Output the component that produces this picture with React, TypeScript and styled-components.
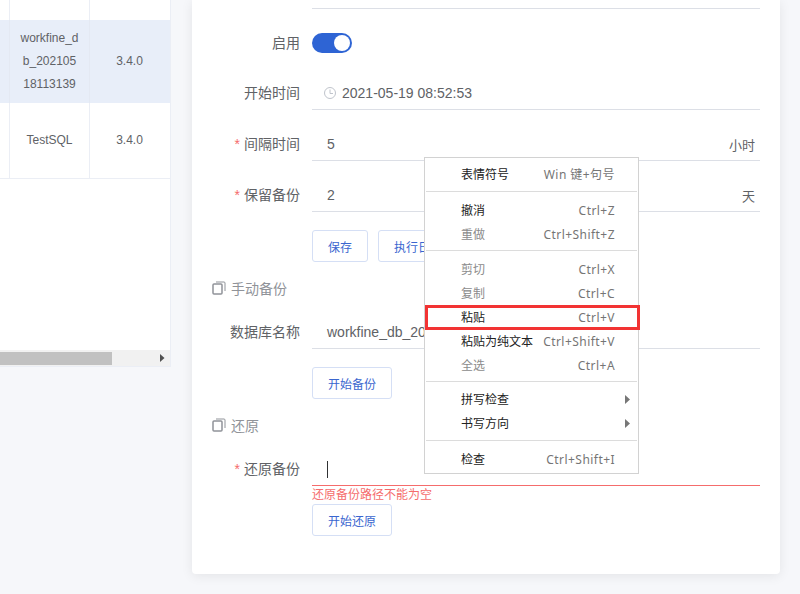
import React from "react";
import styled, { createGlobalStyle } from "styled-components";

const Global = createGlobalStyle`
  html, body { margin: 0; padding: 0; height: 594px; overflow: hidden; background: #f6f7fa; }
  body { font-family: "Liberation Sans", "Noto Sans CJK SC", sans-serif; color: #606266; }
  * { box-sizing: border-box; }
`;

const Page = styled.div`
  display: flex;
  align-items: flex-start;
  gap: 22px;
  width: 800px;
  height: 594px;
  padding-right: 20px;
  position: relative;
  overflow: hidden;
`;

const LeftCard = styled.section`
  width: 171px;
  height: 367px;
  flex: none;
  margin-right: -1px;
  display: flex;
  flex-direction: column;
  background: #fff;
  border-right: 1px solid #ebeef5;
  border-bottom: 1px solid #ebeef5;
`;

const TableRow = styled.div<{ $h: number; $on?: boolean; $end?: boolean }>`
  display: grid;
  grid-template-columns: 10px 80px 79px;
  height: ${(p) => p.$h}px;
  background: ${(p) => (p.$on ? "#e8eef9" : "#fff")};
  border-bottom: ${(p) => (p.$end ? "1px solid #ebeef5" : "none")};
`;

const Cell = styled.div<{ $on?: boolean }>`
  display: flex;
  align-items: center;
  justify-content: center;
  text-align: center;
  font-size: 12px;
  line-height: 23px;
  color: #606266;
  border-right: 1px solid ${(p) => (p.$on ? "#e4e9f3" : "#ebeef5")};
  &:last-child { border-right: none; }
`;

const TableSpace = styled.div`
  flex: 1;
`;

const Scrollbar = styled.div`
  height: 16px;
  background: #f1f1f1;
  display: flex;
  align-items: center;
  justify-content: space-between;
  padding-right: 5px;
`;

const Thumb = styled.div`
  width: 112px;
  height: 13px;
  background: #c1c1c1;
`;

const RightCard = styled.main`
  flex: 1;
  height: 574px;
  background: #fff;
  border-radius: 0 0 4px 4px;
  box-shadow: 0 2px 12px rgba(0, 0, 0, 0.08);
  padding-right: 20px;
  display: flex;
  flex-direction: column;
`;

const TopLine = styled.div`
  height: 9px;
  margin-left: 120px;
  border-bottom: 1px solid #dcdfe6;
  flex: none;
`;

const FormRow = styled.div<{ $mt: number }>`
  display: flex;
  margin-top: ${(p) => p.$mt}px;
  flex: none;
`;

const Label = styled.label`
  width: 120px;
  flex: none;
  padding-right: 12px;
  text-align: right;
  font-size: 14px;
  line-height: 32px;
  color: #606266;
`;

const Star = styled.span`
  color: #f56c6c;
  margin-right: 4px;
`;

const Field = styled.div<{ $error?: boolean }>`
  flex: 1;
  height: 33px;
  display: flex;
  align-items: center;
  justify-content: space-between;
  padding: 0 5px 0 15px;
  font-size: 14px;
  color: #606266;
  border-bottom: 1px solid ${(p) => (p.$error ? "#f56c6c" : "#dcdfe6")};
`;

const ValueWithIcon = styled.span`
  display: flex;
  align-items: center;
  gap: 5px;
  margin-left: -4px;
`;

const Unit = styled.span`
  font-size: 13px;
`;

const Caret = styled.span`
  width: 1px;
  height: 17px;
  background: #303133;
`;

const Toggle = styled.div`
  width: 40px;
  height: 20px;
  margin-top: 6px;
  border-radius: 10px;
  background: #2e64d4;
  display: flex;
  justify-content: flex-end;
  padding: 2px;
`;

const Knob = styled.div`
  width: 16px;
  height: 16px;
  border-radius: 50%;
  background: #fff;
`;

const Actions = styled.div<{ $mt: number }>`
  display: flex;
  gap: 10px;
  margin-top: ${(p) => p.$mt}px;
  margin-left: 120px;
  flex: none;
`;

const Button = styled.button`
  height: 32px;
  padding: 0 15px;
  font-family: inherit;
  font-size: 12px;
  color: #3a66cf;
  background: #fff;
  border: 1px solid #d5dff5;
  border-radius: 3px;
  white-space: nowrap;
`;

const SectionTitle = styled.div<{ $mt: number }>`
  display: flex;
  align-items: center;
  gap: 5px;
  margin-top: ${(p) => p.$mt}px;
  margin-left: 20px;
  height: 20px;
  font-size: 14px;
  color: #909399;
  flex: none;
`;

const ErrorText = styled.div`
  margin-left: 120px;
  height: 18px;
  font-size: 12px;
  line-height: 19px;
  color: #f56c6c;
  flex: none;
`;

const Menu = styled.div`
  position: absolute;
  left: 424px;
  top: 157px;
  width: 215px;
  height: 317px;
  background: #fff;
  border: 1px solid #d2d2d2;
  padding-top: 4px;
  font-family: "Noto Sans", "Noto Sans CJK SC", sans-serif;
  font-size: 12px;
`;

const Item = styled.div<{ $off?: boolean }>`
  height: 24px;
  padding: 0 23px 0 36px;
  display: flex;
  align-items: center;
  justify-content: space-between;
  position: relative;
  color: ${(p) => (p.$off ? "#8b8b8b" : "#222")};
`;

const Keys = styled.span`
  color: #757575;
  letter-spacing: 0.45px;
`;

const Sep = styled.div<{ $top: number; $bottom: number }>`
  height: 1px;
  margin: ${(p) => p.$top}px 1px ${(p) => p.$bottom}px;
  background: #dcdcdc;
`;

const Arrow = styled.svg`
  position: absolute;
  right: 7px;
  top: 8px;
`;

const Highlight = styled.div`
  position: absolute;
  left: 425px;
  top: 305px;
  width: 215px;
  height: 25px;
  border: 3px solid #f23333;
  pointer-events: none;
`;

const CopyIcon = () => (
  <svg width="14" height="14" viewBox="0 0 14 14" fill="none" stroke="#909399">
    <rect x="1" y="3" width="9" height="10" rx="1" strokeWidth="1.5" />
    <path d="M4 1h8a1 1 0 0 1 1 1v8" strokeWidth="1" />
  </svg>
);

const ClockIcon = () => (
  <svg width="14" height="14" viewBox="0 0 14 14" fill="none" stroke="#c0c4cc" strokeWidth="1">
    <circle cx="7" cy="7" r="5.5" />
    <path d="M7 3.5V7.5H10" />
  </svg>
);

const SubArrow = () => (
  <Arrow width="6" height="9" viewBox="0 0 6 9">
    <path d="M0 0l5 4.5L0 9z" fill="#777" />
  </Arrow>
);

export default function App() {
  return (
    <Page>
      <Global />
      <LeftCard>
        <TableRow $h={20}>
          <Cell />
          <Cell />
          <Cell />
        </TableRow>
        <TableRow $h={83} $on>
          <Cell $on />
          <Cell $on>
            workfine_d
            <br />
            b_202105
            <br />
            18113139
          </Cell>
          <Cell $on>3.4.0</Cell>
        </TableRow>
        <TableRow $h={76} $end>
          <Cell />
          <Cell>TestSQL</Cell>
          <Cell>3.4.0</Cell>
        </TableRow>
        <TableSpace />
        <Scrollbar>
          <Thumb />
          <svg width="5" height="8" viewBox="0 0 5 8">
            <path d="M0 0l4.5 4L0 8z" fill="#505050" />
          </svg>
        </Scrollbar>
      </LeftCard>

      <RightCard>
        <TopLine />
        <FormRow $mt={18}>
          <Label>启用</Label>
          <Toggle>
            <Knob />
          </Toggle>
        </FormRow>
        <FormRow $mt={18}>
          <Label>开始时间</Label>
          <Field>
            <ValueWithIcon>
              <ClockIcon />
              2021-05-19 08:52:53
            </ValueWithIcon>
          </Field>
        </FormRow>
        <FormRow $mt={18}>
          <Label>
            <Star>*</Star>间隔时间
          </Label>
          <Field>
            5<Unit>小时</Unit>
          </Field>
        </FormRow>
        <FormRow $mt={18}>
          <Label>
            <Star>*</Star>保留备份
          </Label>
          <Field>
            2<Unit>天</Unit>
          </Field>
        </FormRow>
        <Actions $mt={18}>
          <Button>保存</Button>
          <Button>执行日志</Button>
        </Actions>
        <SectionTitle $mt={16}>
          <CopyIcon />
          手动备份
        </SectionTitle>
        <FormRow $mt={18}>
          <Label>数据库名称</Label>
          <Field>workfine_db_20210518113139</Field>
        </FormRow>
        <Actions $mt={18}>
          <Button>开始备份</Button>
        </Actions>
        <SectionTitle $mt={16}>
          <CopyIcon />
          还原
        </SectionTitle>
        <FormRow $mt={18}>
          <Label>
            <Star>*</Star>还原备份
          </Label>
          <Field $error>
            <Caret />
          </Field>
        </FormRow>
        <ErrorText>还原备份路径不能为空</ErrorText>
        <Actions $mt={0}>
          <Button>开始还原</Button>
        </Actions>
      </RightCard>

      <Menu>
        <Item>
          表情符号<Keys>Win 键+句号</Keys>
        </Item>
        <Sep $top={5} $bottom={6} />
        <Item>
          撤消<Keys>Ctrl+Z</Keys>
        </Item>
        <Item $off>
          重做<Keys>Ctrl+Shift+Z</Keys>
        </Item>
        <Sep $top={4} $bottom={6} />
        <Item $off>
          剪切<Keys>Ctrl+X</Keys>
        </Item>
        <Item $off>
          复制<Keys>Ctrl+C</Keys>
        </Item>
        <Item>
          粘贴<Keys>Ctrl+V</Keys>
        </Item>
        <Item>
          粘贴为纯文本<Keys>Ctrl+Shift+V</Keys>
        </Item>
        <Item $off>
          全选<Keys>Ctrl+A</Keys>
        </Item>
        <Sep $top={4} $bottom={5} />
        <Item>
          拼写检查
          <SubArrow />
        </Item>
        <Item>
          书写方向
          <SubArrow />
        </Item>
        <Sep $top={5} $bottom={6} />
        <Item>
          检查<Keys>Ctrl+Shift+I</Keys>
        </Item>
      </Menu>
      <Highlight />
    </Page>
  );
}
